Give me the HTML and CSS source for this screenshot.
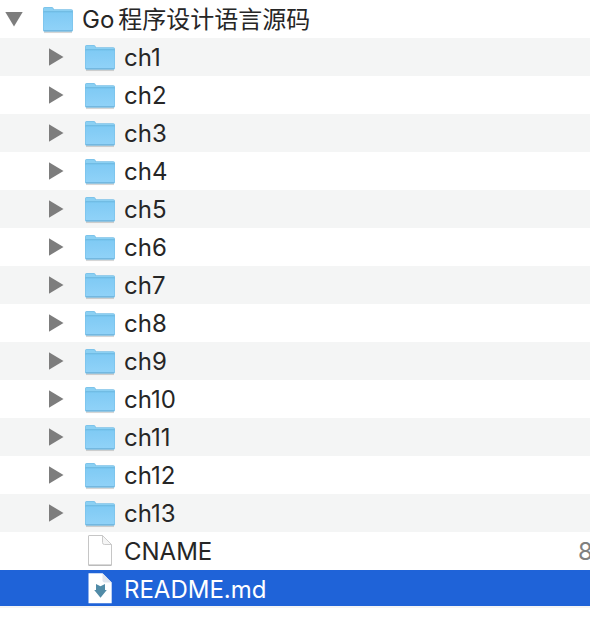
FILE: index.html
```
<!DOCTYPE html>
<html lang="zh-CN">
<head>
    <meta charset="UTF-8">
    <meta name="viewport" content="width=device-width, initial-scale=1.0">
    <title>Go程序设计语言源码</title>
    <link rel="stylesheet" href="styles.css">
</head>
<body>

<svg class="sprite" aria-hidden="true">
    <defs>
        <linearGradient id="folderFill" x1="0" y1="0" x2="0" y2="1">
            <stop offset="0" stop-color="#7fcaf4"/>
            <stop offset="1" stop-color="#90d2f8"/>
        </linearGradient>
        <symbol id="folder" viewBox="0 -2 32 30">
            <path d="M2 26.3h28" stroke="#000" stroke-opacity=".16" stroke-width="1.5"/>
            <path d="M1 2.7Q1 1 2.7 1H9.5Q10.8 1 11.4 2.1L12 3.3H29.2Q31 3.3 31 5.1V24.2Q31 25.5 29.5 25.5H2.5Q1 25.5 1 24.2Z" fill="#78c0e8"/>
            <path d="M1.6 3.2Q1.6 1.8 2.8 1.8H9.5Q10.5 1.8 11 2.9L11.7 4.1H29.2Q30.4 4.1 30.4 5.6H1.6Z" fill="#8bd0f3"/>
            <rect x="1.6" y="6" width="28.8" height="18.6" rx="1" fill="url(#folderFill)"/>
            <path d="M1.5 5.8h29" stroke="#68b5df" stroke-width=".9"/>
            <path d="M2 24.9h28" stroke="#65acd4" stroke-width=".9"/>
        </symbol>
        <symbol id="page" viewBox="0 0 32 32">
            <path d="M5 .5H18.5L27.5 9.5V30H4.5V1Q4.5 .5 5 .5Z" fill="#fff" stroke="#c6c6c6"/>
            <path d="M18.5 .5V7.5Q18.5 9.5 20.5 9.5H27.5Z" fill="#f5f5f5" stroke="#cbcbcb"/>
            <path d="M4.5 30.3h23" stroke="#b2b2b2"/>
        </symbol>
        <symbol id="markdown" viewBox="0 0 32 32">
            <path d="M4.5 .3H18.5L27.7 9.5V30.3H4.5Z" fill="#fff"/>
            <path d="M18.5 .3V7.5Q18.5 9.5 20.5 9.5H27.7Z" fill="#dfe5ee"/>
            <path d="M12 11 16.5 13.2 21 11V17H22.8L16.5 24.8 10.2 17H12Z" fill="#518ba7"/>
        </symbol>
    </defs>
</svg>

<main class="browser">
    <div class="row row-root">
        <button class="toggle open" aria-label="Go程序设计语言源码" aria-expanded="true"></button>
        <svg class="folder"><use href="#folder"/></svg>
        <span class="name"><span class="latin">Go</span>程序设计语言源码</span>
    </div>

    <div class="children" id="children"></div>
</main>

<script>
    const items = [];
    for (let i = 1; i <= 13; i++) {
        items.push({ name: "ch" + i, icon: "folder" });
    }
    items.push({ name: "CNAME", icon: "page", size: "8" });
    items.push({ name: "README.md", icon: "markdown", selected: true });

    const children = document.getElementById("children");

    items.forEach(item => {
        const isFolder = item.icon === "folder";
        const toggle = isFolder
            ? `<button class="toggle" aria-label="${item.name}" aria-expanded="false"></button>`
            : `<span class="toggle-space"></span>`;
        const size = item.size ? `<span class="size">${item.size}</span>` : "";
        const row = `<div class="row${item.selected ? " selected" : ""}">
                        ${toggle}
                        <svg class="${isFolder ? "folder" : "file"}"><use href="#${item.icon}"/></svg>
                        <span class="name">${item.name}</span>
                        ${size}
                    </div>`;
        children.insertAdjacentHTML("beforeend", row);
    });

    const rootToggle = document.querySelector(".row-root .toggle");
    rootToggle.addEventListener("click", () => {
        const open = rootToggle.classList.toggle("open");
        rootToggle.setAttribute("aria-expanded", open);
        children.hidden = !open;
    });
</script>

</body>
</html>
```

FILE: styles.css
```
body {
    margin: 0;
    background-color: #ffffff;
    color: #262626;
    font-family: Inter, "Noto Sans CJK SC", sans-serif;
    font-size: 24px;
    line-height: 38px;
}

.sprite {
    position: absolute;
    width: 0;
    height: 0;
}

.browser {
    overflow: hidden;
}

.row {
    display: flex;
    align-items: center;
    height: 38px;
    padding-left: 46px;
    white-space: nowrap;
}

.row-root {
    padding-left: 4px;
}

.children .row:nth-child(odd) {
    background-color: #f4f5f5;
}

.toggle,
.toggle-space {
    flex: none;
    width: 20px;
    height: 20px;
    margin-right: 18px;
}

.toggle {
    padding: 0;
    border: none;
    background: none;
    cursor: pointer;
}

.toggle::before {
    content: "";
    display: block;
    width: 15px;
    height: 18px;
    margin: 0 auto;
    background-color: #7d7d7d;
    clip-path: polygon(0 0, 100% 50%, 0 100%);
}

.toggle.open::before {
    width: 18px;
    height: 15px;
    clip-path: polygon(0 0, 100% 0, 50% 100%);
}

.folder,
.file {
    flex: none;
    width: 32px;
    margin-right: 8px;
}

.folder {
    height: 30px;
}

.file {
    height: 32px;
}

.name,
.size {
    padding-top: 2px;
}

.name {
    flex: 1;
}

.latin {
    margin-right: 4px;
}

.size {
    width: 12px;
    color: #808080;
}

.children .selected:nth-child(odd) {
    background-color: #1f63d8;
    box-shadow: inset 0 -2px #f4f5f5;
    color: #ffffff;
}
```
